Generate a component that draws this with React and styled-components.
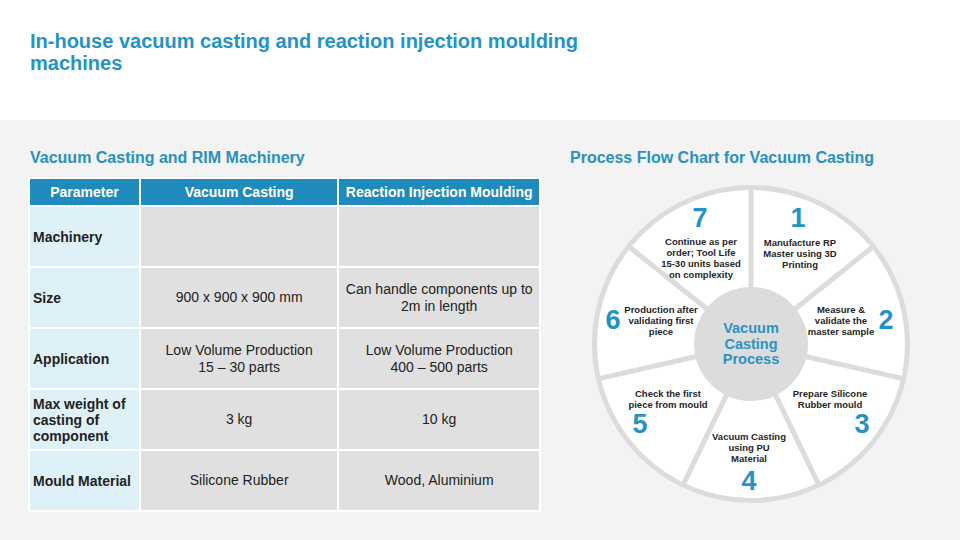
import React from "react";
import styled, { createGlobalStyle } from "styled-components";

const GlobalStyle = createGlobalStyle`
  html, body {
    margin: 0;
    padding: 0;
    background: #f3f3f3;
  }
  body {
    font-family: "Liberation Sans", Arial, sans-serif;
  }
`;

const Page = styled.div`
  width: 960px;
  height: 540px;
  overflow: hidden;
  display: flex;
  flex-direction: column;
`;

const TopBand = styled.header`
  height: 120px;
  background: #ffffff;
  padding: 30px 0 0 30px;
  box-sizing: border-box;
`;

const Title = styled.h1`
  margin: 0;
  width: 600px;
  font-size: 20px;
  line-height: 22px;
  font-weight: bold;
  color: #2593c6;
`;

const Body = styled.main`
  flex: 1;
  background: #f3f3f3;
  display: flex;
  padding: 29px 0 0 30px;
  box-sizing: border-box;
`;

const LeftCol = styled.section`
  width: 513px;
  margin-left: -2px;
`;

const RightCol = styled.section`
  margin-left: 29px;
`;

const SubHead = styled.h2`
  margin: 0 0 ${(p) => p.gap || 10}px ${(p) => p.indent || 0}px;
  font-size: 16px;
  line-height: 18px;
  font-weight: bold;
  color: #2a8fc2;
`;

const Table = styled.table`
  border-collapse: separate;
  border-spacing: 2px;
  background: #ffffff;
  width: 513px;
  font-size: 14px;
  color: #222;
`;

const HeadCell = styled.th`
  background: #1f8bbd;
  color: #ffffff;
  font-weight: bold;
  height: 26px;
  padding: 0;
  text-align: center;
  width: ${(p) => p.w}px;
`;

const ParamCell = styled.td`
  background: #def1f9;
  font-weight: bold;
  height: 59px;
  padding: 0 3px;
  line-height: 16px;
  text-align: left;
`;

const ValueCell = styled.td`
  background: #e0e0e0;
  text-align: center;
  line-height: 17px;
  padding: 0 4px;
`;

const Wheel = styled.div`
  position: relative;
  width: 320px;
  height: 320px;
  margin: 17px 0 0 21px;
`;

const WheelSvg = styled.svg`
  position: absolute;
  inset: 0;
`;

const Step = styled.div`
  position: absolute;
  left: ${(p) => p.x}px;
  top: ${(p) => p.y}px;
  transform: translate(-50%, -50%);
  text-align: center;
  white-space: nowrap;
  font-size: 9.5px;
  line-height: 11px;
  font-weight: bold;
  color: #262626;
`;

const StepNum = styled.div`
  position: absolute;
  left: ${(p) => p.x}px;
  top: ${(p) => p.y}px;
  transform: translate(-50%, -50%);
  font-size: 27px;
  line-height: 27px;
  font-weight: bold;
  color: #2592c6;
`;

const Hub = styled.div`
  position: absolute;
  left: 160px;
  top: 160px;
  transform: translate(-50%, -50%);
  text-align: center;
  white-space: nowrap;
  font-size: 14.5px;
  line-height: 15.5px;
  font-weight: bold;
  color: #2a93c6;
`;

const rows = [
  { p: "Machinery", vc: "", rim: "" },
  { p: "Size", vc: "900 x 900 x 900 mm", rim: ["Can handle components up to", "2m in length"] },
  {
    p: "Application",
    vc: ["Low Volume Production", "15 – 30 parts"],
    rim: ["Low Volume Production", "400 – 500 parts"],
  },
  { p: ["Max weight of", "casting of", "component"], vc: "3 kg", rim: "10 kg" },
  { p: "Mould Material", vc: "Silicone Rubber", rim: "Wood, Aluminium" },
];

const lines = (t) =>
  Array.isArray(t)
    ? t.map((l, i) => (
        <React.Fragment key={i}>
          {i > 0 && <br />}
          {l}
        </React.Fragment>
      ))
    : t;

// positions relative to the wheel box (origin at its top-left)
const steps = [
  { n: 7, nx: 109, ny: 34, tx: 110, ty: 74, t: ["Continue as per", "order; Tool Life", "15-30 units based", "on complexity"] },
  { n: 1, nx: 207, ny: 34, tx: 209, ty: 69, t: ["Manufacture RP", "Master using 3D", "Printing"] },
  { n: 2, nx: 295, ny: 136, tx: 250, ty: 136, t: ["Measure &", "validate the", "master sample"] },
  { n: 3, nx: 271, ny: 240, tx: 239, ty: 215, t: ["Prepare Silicone", "Rubber mould"] },
  { n: 4, nx: 158, ny: 297, tx: 158, ty: 263, t: ["Vacuum Casting", "using PU", "Material"] },
  { n: 5, nx: 49, ny: 240, tx: 77, ty: 215, t: ["Check the first", "piece from mould"] },
  { n: 6, nx: 22, ny: 136, tx: 70, ty: 136, t: ["Production after", "validating first", "piece"] },
];

const spokes = Array.from({ length: 7 }, (_, k) => {
  const a = (k * 2 * Math.PI) / 7;
  return {
    x1: 160 + 55 * Math.sin(a),
    y1: 160 - 55 * Math.cos(a),
    x2: 160 + 158 * Math.sin(a),
    y2: 160 - 158 * Math.cos(a),
  };
});

export default function App() {
  return (
    <Page>
      <GlobalStyle />
      <TopBand>
        <Title>In-house vacuum casting and reaction injection moulding machines</Title>
      </TopBand>
      <Body>
        <LeftCol>
          <SubHead indent={2}>Vacuum Casting and RIM Machinery</SubHead>
          <Table>
            <thead>
              <tr>
                <HeadCell w={108}>Parameter</HeadCell>
                <HeadCell w={195}>Vacuum Casting</HeadCell>
                <HeadCell w={198}>Reaction Injection Moulding</HeadCell>
              </tr>
            </thead>
            <tbody>
              {rows.map((r, i) => (
                <tr key={i}>
                  <ParamCell>{lines(r.p)}</ParamCell>
                  <ValueCell>{lines(r.vc)}</ValueCell>
                  <ValueCell>{lines(r.rim)}</ValueCell>
                </tr>
              ))}
            </tbody>
          </Table>
        </LeftCol>
        <RightCol>
          <SubHead>Process Flow Chart for Vacuum Casting</SubHead>
          <Wheel>
            <WheelSvg width="320" height="320" viewBox="0 0 320 320">
              <circle cx="160" cy="160" r="156.5" fill="#ffffff" stroke="#dcdcdc" strokeWidth="5" />
              {spokes.map((s, i) => (
                <line key={i} {...s} stroke="#dcdcdc" strokeWidth="5" />
              ))}
              <circle cx="160" cy="160" r="57" fill="#dcdcdc" />
            </WheelSvg>
            {steps.map((s) => (
              <React.Fragment key={s.n}>
                <StepNum x={s.nx} y={s.ny}>{s.n}</StepNum>
                <Step x={s.tx} y={s.ty}>{lines(s.t)}</Step>
              </React.Fragment>
            ))}
            <Hub>
              Vacuum
              <br />
              Casting
              <br />
              Process
            </Hub>
          </Wheel>
        </RightCol>
      </Body>
    </Page>
  );
}
